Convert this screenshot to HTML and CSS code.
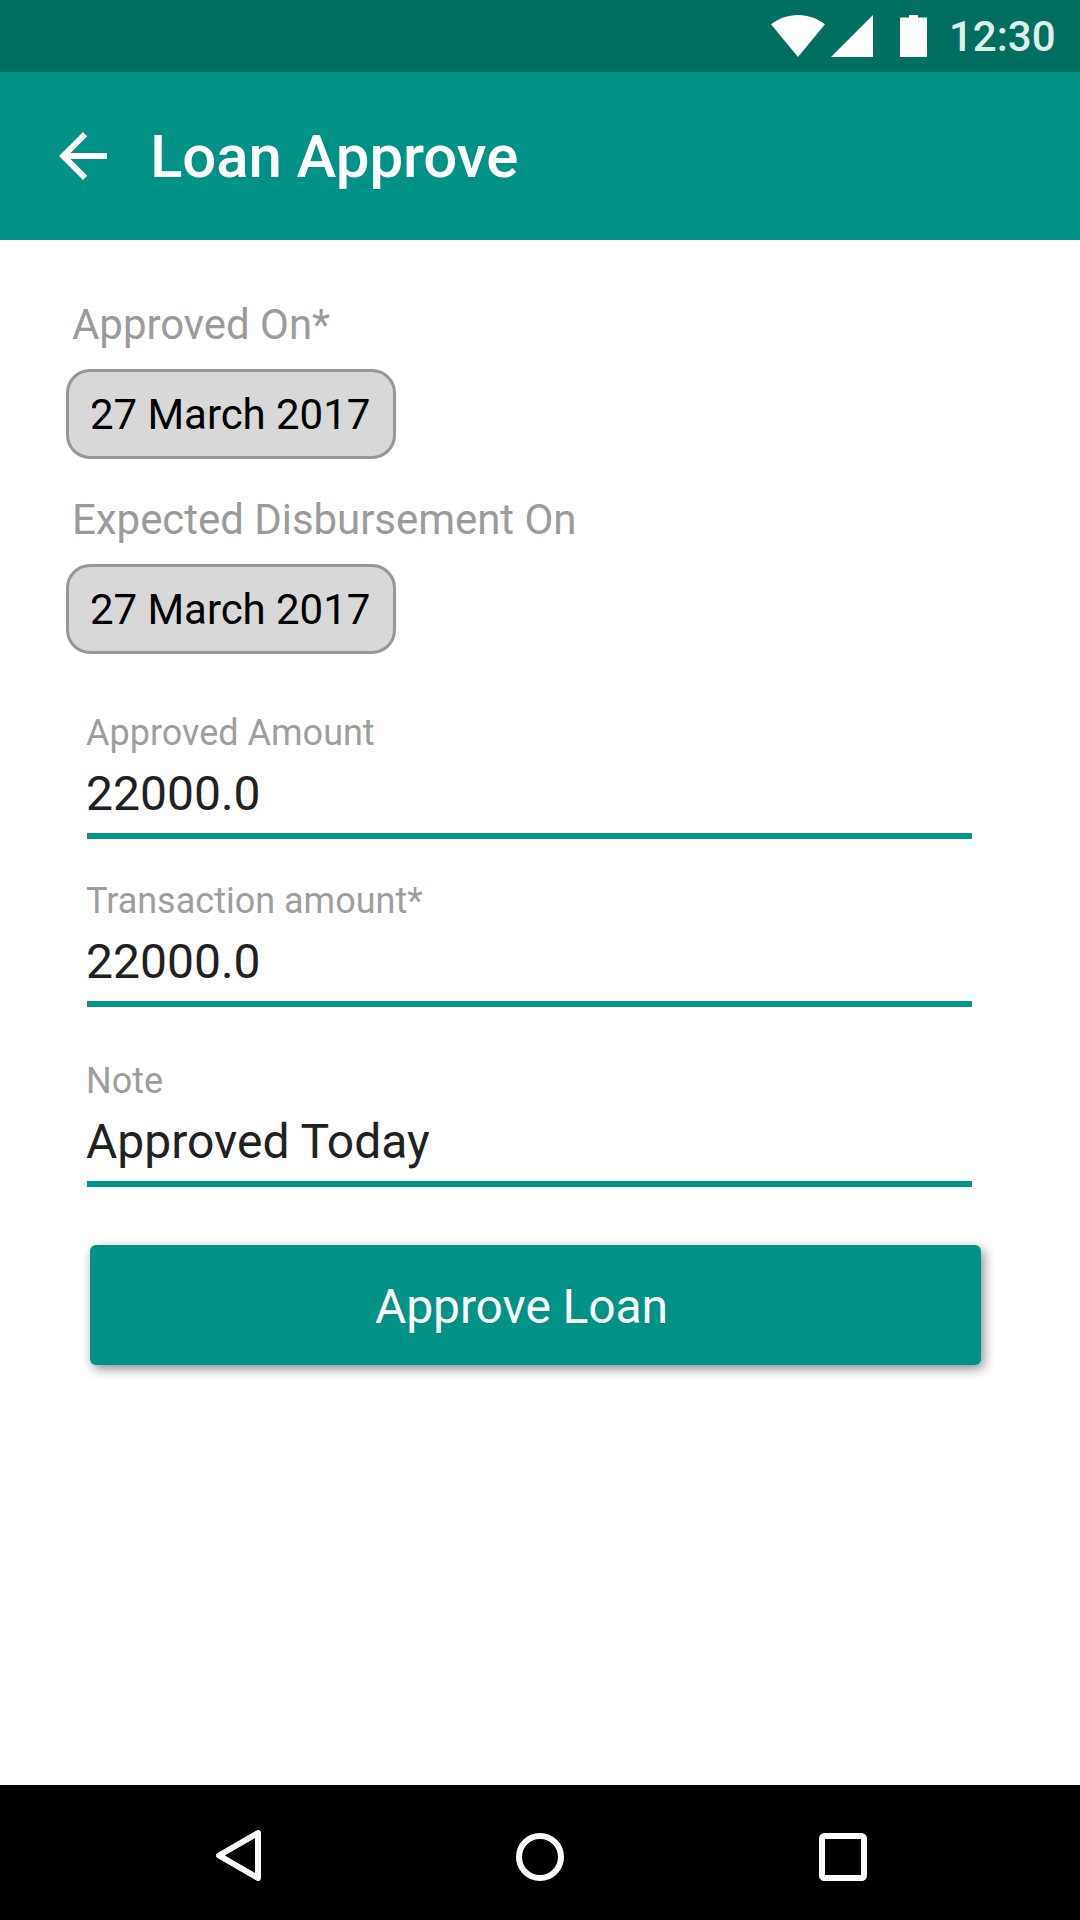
FILE: index.html
```html
<!DOCTYPE html>
<html lang="en">
<head>
<meta charset="utf-8">
<title>Loan Approve</title>
<link rel="stylesheet" href="styles.css">
</head>
<body>
<div class="screen">
  <div class="status-bar">
    <svg class="status-icons" width="156" height="42" viewBox="0 0 156 42" aria-hidden="true">
      <path d="M27 42 0 9.3C7.500 3.500 16.800 0 27 0s19.500 3.500 27 9.300z"/>
      <path d="M60 42h42V0z"/>
      <path d="M129 42h27V2.500h-9V0h-9v2.500h-9z"/>
    </svg>
    <span class="clock">12:30</span>
  </div>

  <header class="app-bar">
    <svg class="back" width="72" height="72" viewBox="0 0 24 24" aria-label="Back">
      <path d="M20 11H7.830l5.590-5.590L12 4l-8 8 8 8 1.410-1.410L7.830 13H20z"/>
    </svg>
    <h1 class="title">Loan Approve</h1>
  </header>

  <main class="content">
    <section class="date-field">
      <div class="date-label">Approved On*</div>
      <button class="date-chip" type="button">27 March 2017</button>
    </section>
    <section class="date-field">
      <div class="date-label">Expected Disbursement On</div>
      <button class="date-chip" type="button">27 March 2017</button>
    </section>

    <div class="fields">
      <div class="field">
        <div class="field-label">Approved Amount</div>
        <div class="field-value">22000.0</div>
      </div>
      <div class="field">
        <div class="field-label">Transaction amount*</div>
        <div class="field-value">22000.0</div>
      </div>
      <div class="field field-note">
        <div class="field-label">Note</div>
        <div class="field-value">Approved Today</div>
      </div>
    </div>

    <button class="submit" type="button">Approve Loan</button>
  </main>

  <nav class="nav-bar">
    <svg width="45" height="51" viewBox="0 0 45 51" aria-label="Back">
      <path d="M42 3 3 25.500 42 48z"/>
    </svg>
    <svg width="48" height="48" viewBox="0 0 48 48" aria-label="Home">
      <circle cx="24" cy="24" r="21"/>
    </svg>
    <svg width="48" height="48" viewBox="0 0 48 48" aria-label="Recents">
      <rect x="3" y="3" width="42" height="42" rx="2.500"/>
    </svg>
  </nav>
</div>
</body>
</html>
```
FILE: styles.css
```css
* {
  box-sizing: border-box;
}

body {
  margin: 0;
  font-family: Roboto, sans-serif;
}

button {
  margin: 0;
  font: inherit;
  text-align: left;
}

.screen {
  display: flex;
  flex-direction: column;
  width: 1080px;
  height: 1920px;
  overflow: hidden;
  background: #fff;
}

.status-bar {
  display: flex;
  align-items: flex-start;
  height: 72px;
  padding-left: 771px;
  background: #006f60;
}

.status-icons {
  margin-top: 15px;
  fill: #fff;
}

.clock {
  margin: 12px 0 0 22px;
  font-size: 42px;
  font-weight: 500;
  line-height: 49px;
  color: rgba(255, 255, 255, 0.9);
}

.app-bar {
  display: flex;
  align-items: flex-start;
  gap: 31px;
  height: 168px;
  padding: 48px 48px 48px 47px;
  background: #009285;
}

.back {
  fill: #fff;
}

.title {
  margin: 1px 0 0;
  font-size: 60px;
  font-weight: 500;
  line-height: 71px;
  letter-spacing: -0.1px;
  color: #fff;
}

.content {
  flex: 1;
  padding: 60px 66px 0;
}

.date-field + .date-field {
  margin-top: 36px;
}

.date-label {
  padding-left: 6px;
  font-size: 42px;
  line-height: 49px;
  letter-spacing: -0.05px;
  color: #9b9b9b;
}

.date-chip {
  display: block;
  width: 330px;
  height: 90px;
  margin-top: 20px;
  padding: 18px 0 17px 21px;
  border: 3px solid #979797;
  border-radius: 24px;
  background: #d8d8d8;
  font-size: 42px;
  line-height: 49px;
  letter-spacing: -0.05px;
  color: #000;
}

.fields {
  width: 885px;
  margin: 58px 0 0 21px;
}

.field {
  border-bottom: 6px solid #009688;
}

.field + .field {
  margin-top: 41px;
}

.field + .field-note {
  margin-top: 53px;
}

.field-label {
  margin-left: -1px;
  font-size: 36px;
  line-height: 42px;
  color: #9e9e9e;
}

.field-value {
  margin-left: -1px;
  padding: 11px 0;
  font-size: 48px;
  line-height: 57px;
  color: #212121;
}

.submit {
  display: block;
  width: 891px;
  height: 120px;
  margin: 58px 0 0 24px;
  padding: 33px 0 30px 285px;
  border: 0;
  border-radius: 6px;
  background: #009285;
  box-shadow: 3px 4px 12px rgba(0, 0, 0, 0.45);
  font-size: 48px;
  line-height: 57px;
  letter-spacing: -0.1px;
  color: #fff;
}

.nav-bar {
  display: flex;
  align-items: flex-end;
  gap: 255px;
  height: 135px;
  padding: 0 0 39px 216px;
  background: #000;
}

.nav-bar svg {
  fill: none;
  stroke: #fff;
  stroke-width: 6;
  stroke-linejoin: round;
}
```
